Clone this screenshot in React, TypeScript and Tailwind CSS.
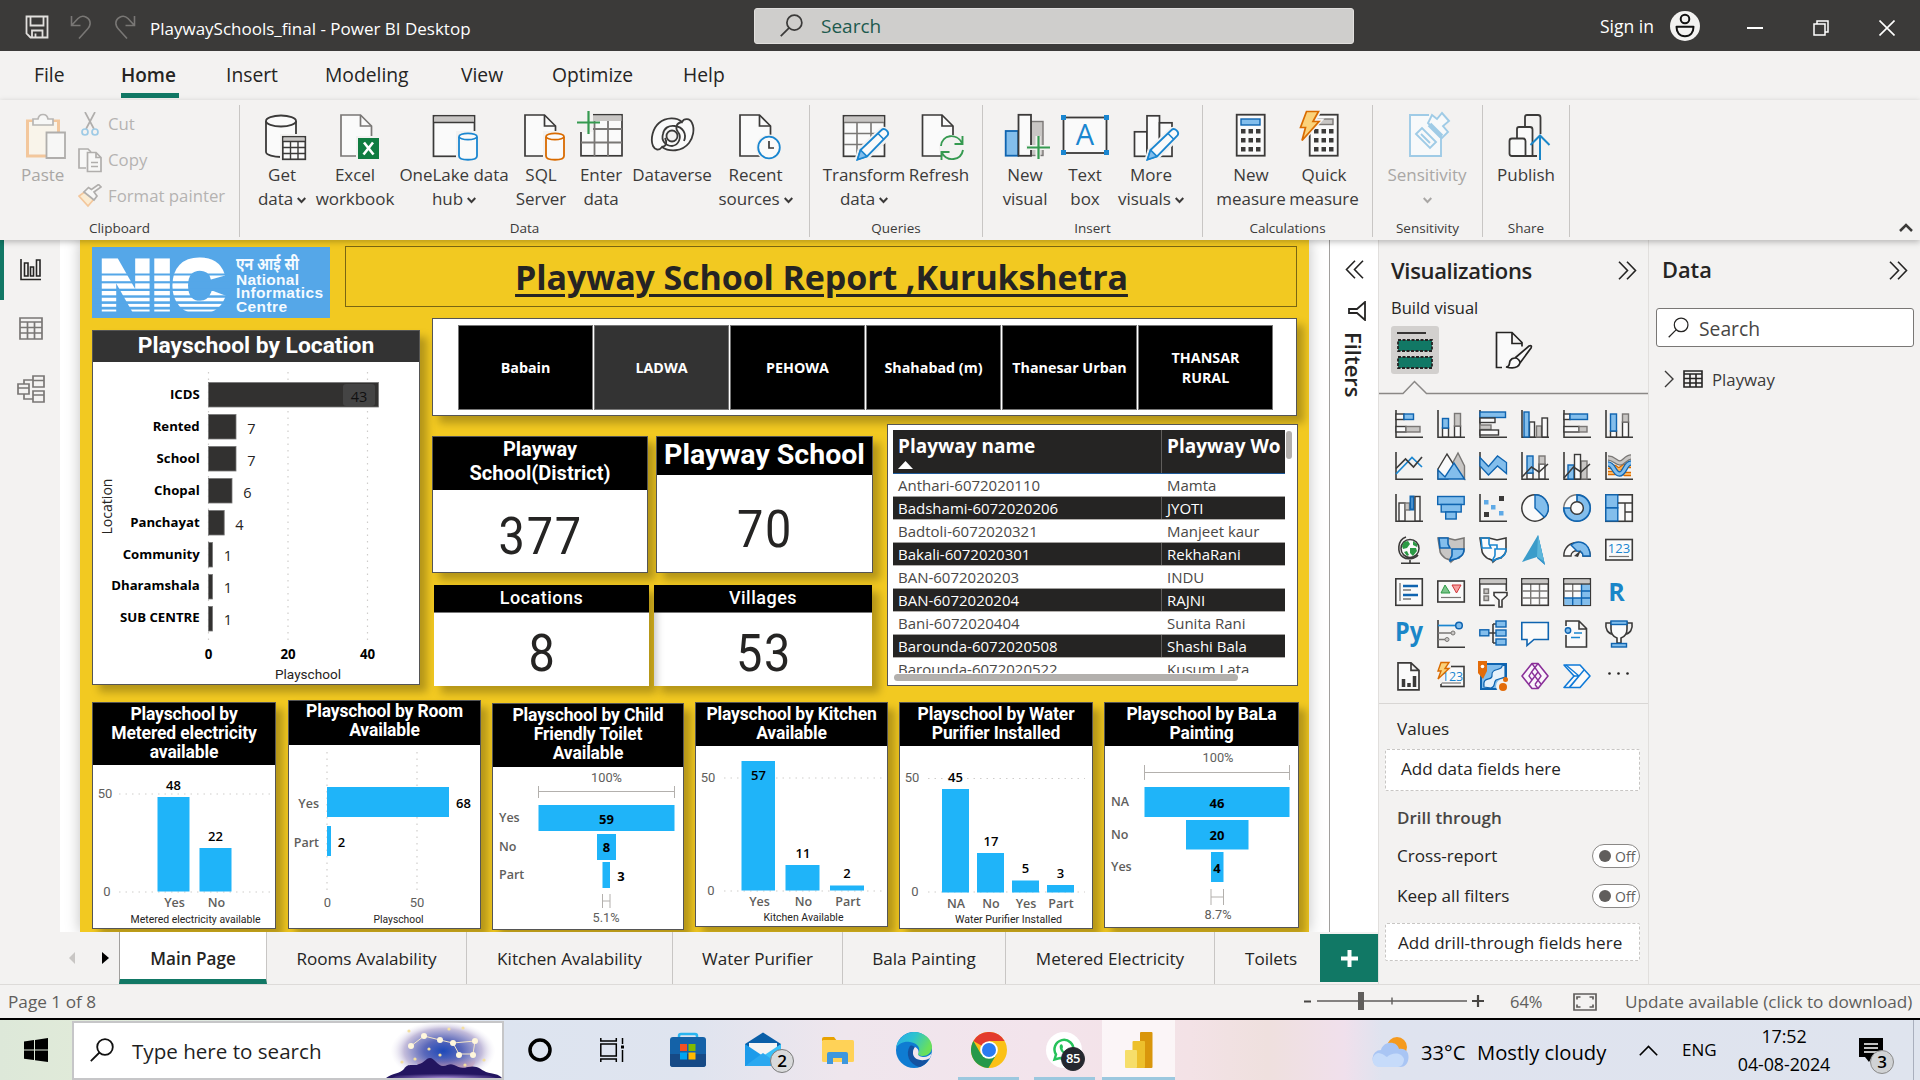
import React from "react";

const D = "#3b3a39";
const B = "#0f64b0";
const BF = "#83beec";
const G = "#797775";
const GF = "#c8c6c4";
const W = "#fafafa";
const UI = "'Open Sans', 'Noto Sans', sans-serif";
const DIN = "Roboto, sans-serif";

type Kids = { children?: React.ReactNode };

/* ---------- shared drawing helpers ---------- */

function R({ x, y, w, h, f = W, s = D, sw = 1.4 }: { x: number; y: number; w: number; h: number; f?: string; s?: string; sw?: number }) {
  return <rect x={x} y={y} width={w} height={h} fill={f} stroke={s} strokeWidth={sw} />;
}

function P({ d, s = D, f = "none", sw = 1.4 }: { d: string; s?: string; f?: string; sw?: number }) {
  return <path d={d} stroke={s} fill={f} strokeWidth={sw} />;
}

function Tx({
  x, y, size, children, fill = "#000", weight = 400, anchor = "middle", len, font = UI,
}: Kids & { x: number; y: number; size: number; fill?: string; weight?: number; anchor?: "start" | "middle" | "end"; len?: number; font?: string }) {
  return (
    <text x={x} y={y + size * 0.36} fontSize={size} fill={fill} fontWeight={weight} textAnchor={anchor} fontFamily={font} textLength={len} lengthAdjust="spacingAndGlyphs">
      {children}
    </text>
  );
}

function Magnifier({ size, color = D, sw = 1.8 }: { size: number; color?: string; sw?: number }) {
  return (
    <svg width={size} height={size} viewBox="0 0 24 24" fill="none" stroke={color} strokeWidth={sw}>
      <circle cx="15" cy="9" r="7.8" />
      <path d="M9.5 14.5L.8 23.2" />
    </svg>
  );
}

function Chevrons({ left = false }: { left?: boolean }) {
  return (
    <svg width="19" height="19" viewBox="0 0 19 19" fill="none" stroke="#252423" strokeWidth="1.6" className={left ? "-scale-x-100" : ""}>
      <path d="M1 .8l8.5 8.7L1 18.2M9 .8l8.5 8.7L9 18.2" />
    </svg>
  );
}

/* ---------- title bar ---------- */

function TitleBar() {
  return (
    <header className="flex h-[51px] items-center bg-[#3b3a39] text-white">
      <svg className="ml-[25px] mt-[3px]" width="24" height="24" viewBox="0 0 24 24" fill="none" stroke="#e1dfdd" strokeWidth="1.8">
        <path d="M1.5 1.5h21v21H5.5l-4-4zM5.5 1.5v9h13v-9M7 22.500v-7h10.500v7M10.500 18.500v4" />
      </svg>
      <svg className="ml-[21px] mt-[2px]" width="22" height="24" viewBox="0 0 22 24" fill="none" stroke="#797775" strokeWidth="1.6">
        <path d="M1.500 1v9.500h9M1.500 10.500L8 3.500c5-5 13-.5 12 6-.3 1.500-1 3-2 4L9 23.500" />
      </svg>
      <svg className="ml-[22px] mt-[2px] -scale-x-100" width="22" height="24" viewBox="0 0 22 24" fill="none" stroke="#797775" strokeWidth="1.6">
        <path d="M1.500 1v9.500h9M1.500 10.500L8 3.500c5-5 13-.5 12 6-.3 1.500-1 3-2 4L9 23.500" />
      </svg>
      <div className="ml-[14px] mt-[7px] w-[604px] whitespace-nowrap text-[17px]">PlaywaySchools_final - Power BI Desktop</div>
      <div className="flex h-[36px] w-[600px] items-center rounded-[3px] border border-[#e1dfdd] bg-[#cfcecc] pl-[25px]">
        <Magnifier size={23} />
        <span className="ml-[18px] mt-[2px] text-[19px] text-[#1d5a4e]">Search</span>
      </div>
      <div className="ml-[246px] mt-[2px] w-[54px] whitespace-nowrap text-[17.500px]">Sign in</div>
      <svg className="ml-[16px]" width="30" height="30" viewBox="0 0 30 30">
        <circle cx="15" cy="15" r="15" fill="#f3f2f1" />
        <circle cx="15" cy="8" r="4.300" fill="none" stroke="#111" strokeWidth="2" />
        <path d="M6.500 15.800h17c0 5.500-3 9.400-8.500 9.400s-8.500-4-8.500-9.400z" fill="none" stroke="#111" strokeWidth="2" strokeLinejoin="round" />
      </svg>
      <svg className="ml-[47px] mt-[5px]" width="16" height="2" viewBox="0 0 16 2"><path d="M0 1h16" stroke="#fff" strokeWidth="2" /></svg>
      <svg className="ml-[50px] mt-[4px]" width="16" height="16" viewBox="0 0 16 16" fill="none" stroke="#fff" strokeWidth="1.500">
        <path d="M1 4h11v11H1zM4 4V1h11v11h-3" />
      </svg>
      <svg className="ml-[50px] mt-[4px]" width="16" height="16" viewBox="0 0 16 16" stroke="#fff" strokeWidth="1.600"><path d="M.5.5l15 15M15.500.5l-15 15" /></svg>
    </header>
  );
}

function MenuBar() {
  return (
    <nav className="flex h-[49px] bg-[#f3f2f1] pl-[34px] text-[19.300px] leading-[26px] text-[#252423]">
      <div className="w-[87px] pt-[11px]">File</div>
      <div className="w-[105px] pt-[11px]">
        <div className="w-[58px] border-b-[5px] border-[#117865] pb-[5px] text-[19px] font-semibold">Home</div>
      </div>
      <div className="w-[99px] pt-[11px]">Insert</div>
      <div className="w-[136px] pt-[11px]">Modeling</div>
      <div className="w-[91px] pt-[11px]">View</div>
      <div className="w-[131px] pt-[11px]">Optimize</div>
      <div className="pt-[11px]">Help</div>
    </nav>
  );
}

/* ---------- ribbon icons (48 x 48) ---------- */

function Doc({ x = 8, s = D }: { x?: number; s?: string }) {
  return (
    <g transform={`translate(${x} 0)`}>
      <path d="M1 3h19.500l11 11v30H1z" fill={W} stroke={s} strokeWidth="1.700" />
      <path d="M20.500 3v11h11" fill="none" stroke={s} strokeWidth="1.700" />
    </g>
  );
}

function Cyl({ s, f = W }: { s: string; f?: string }) {
  return (
    <g>
      <rect x="26" y="19" width="24" height="31" fill="#f3f2f1" />
      <path d="M29 25v19c0 5 18 5 18 0V25" fill={f} stroke={s} strokeWidth="1.800" />
      <ellipse cx="38" cy="24.500" rx="9" ry="3.200" fill={f} stroke={s} strokeWidth="1.800" />
    </g>
  );
}

function Pencil({ x = 0 }: { x?: number }) {
  return (
    <g transform={`translate(${x} 0)`}>
      <path d="M17 48l3-10 21-20c3-3 10 3 7 7L27 45z" fill={W} stroke="#f3f2f1" strokeWidth="5" />
      <path d="M17.500 47.500l3-9.500 21-20c3-3 8.500 2 6 5.500L27 44.500z" fill={W} stroke="#1a86d0" strokeWidth="1.800" />
      <path d="M17.500 47.500l3-9.500 6.500 6.500z" fill={BF} stroke="#1a86d0" strokeWidth="1.600" />
      <path d="M38 21.500l6 6" fill="none" stroke="#1a86d0" strokeWidth="1.600" />
    </g>
  );
}

function Calc() {
  return (
    <g>
      <R x={9.700} y={2.700} w={28} h={41} sw={1.800} />
      {[18, 27, 36].map((y) => [14, 21.500, 29].map((x) => <rect key={`${x}-${y}`} x={x} y={y - 1} width="4.500" height="4.500" fill={D} />))}
    </g>
  );
}

const ribbonIcons: Record<string, React.ReactNode> = {
  get: (
    <g>
      <path d="M8 9v30c0 4 8 6 15 6V22h15V9z" fill={W} />
      <path d="M8 9v31c0 3 8 5 15 5M38 9v13" fill="none" stroke={D} strokeWidth="1.800" />
      <ellipse cx="23" cy="9" rx="15" ry="5.500" fill={W} stroke={D} strokeWidth="1.800" />
      <rect x="22" y="22" width="26" height="26" fill="#f3f2f1" />
      <R x={24.800} y={24.800} w={22.500} h={22.500} sw={1.700} />
      <rect x="25.500" y="25.500" width="21" height="4" fill={GF} />
      <P d="M25 29.500h22M25 35.500h22M25 41.500h22M32.500 29.500v18M40 29.500v18" />
    </g>
  ),
  excel: (
    <g>
      <Doc x={9} s={G} />
      <rect x="25" y="24" width="25" height="25" fill="#f3f2f1" />
      <rect x="27" y="26" width="21" height="21" fill="#107c41" />
      <path d="M33 30.500l9.500 12M42 30.500l-9.500 12" stroke="#fff" strokeWidth="2.600" />
    </g>
  ),
  onelake: (
    <g>
      <R x={3.500} y={3.800} w={41} h={40.500} sw={1.700} />
      <rect x="4.500" y="4.600" width="39.500" height="5.500" fill={GF} />
      <P d="M4 10.500h40" />
      <Cyl s="#1a86d0" />
    </g>
  ),
  sql: <g><Doc x={7} /><Cyl s="#d96b00" /></g>,
  enter: (
    <g>
      <R x={4} y={2.800} w={41} h={41} sw={1.700} />
      <rect x="5" y="3.500" width="39.500" height="5.500" fill={GF} />
      <P d="M4 17h41M4 30.500h41M17.500 9v35M31 9v35" s={G} sw={1.800} />
      <rect x="-2" y="-3" width="18" height="23" fill="#f3f2f1" />
      <path d="M0 10.500h23M11.500-1v23" stroke="#359a50" strokeWidth="2.200" />
    </g>
  ),
  dataverse: (
    <g fill={W} stroke={D} strokeWidth="1.800">
      <path d="M5 34C2 27 5 16 11 11c7-6 18-6 23-1 2-4 8-4 10 1 3 6 1 15-3 20-7 9-20 9-27 4-3 4-7 3-9-1z" />
      <path d="M34 10c-6 1-7 6-4 10 4 5 1 13-6 14-7 0-11-6-9-12 1-6 6-9 12-8 8 1 12 8 9 15" fill="none" />
      <path d="M14 35c5-1 5-5 3-9" fill="none" />
      <circle cx="24" cy="24" r="5.500" fill="#f3f2f1" />
    </g>
  ),
  recent: (
    <g>
      <Doc x={7} />
      <circle cx="37" cy="35.500" r="13" fill="#f3f2f1" />
      <circle cx="37" cy="35.500" r="10.800" fill={W} stroke="#1a86d0" strokeWidth="1.800" />
      <P d="M37 29v7h5" s={D} sw={1.700} />
    </g>
  ),
  transform: (
    <g>
      <R x={3.500} y={3.800} w={41} h={40.500} sw={1.700} />
      <rect x="4.500" y="4.600" width="39.500" height="5.500" fill={GF} />
      <P d="M4 10.500h40M4 21.500h40M4 32.500h40M17 10.500v34M31 10.500v34" s={G} sw={1.600} />
      <Pencil />
    </g>
  ),
  refresh: (
    <g>
      <Doc x={6.500} />
      <circle cx="37" cy="36" r="13" fill="#f3f2f1" />
      <path d="M26 34c1-12 16-13 21-3M48 38c-2 11-16 12-21 3M47.500 24v8h-8M26.500 48v-8h8" fill="none" stroke="#359a50" strokeWidth="1.900" />
    </g>
  ),
  newvis: (
    <g>
      <R x={30} y={9.500} w={12} h={34} f={GF} s={G} />
      <R x={4.700} y={19} w={12.500} h={24.700} f={BF} s={B} sw={1.800} />
      <R x={17.500} y={2.800} w={12.500} h={41} sw={1.800} />
      <path d="M25 35.500h24M37 24v24" stroke="#f3f2f1" strokeWidth="5" />
      <path d="M26 35.500h23M37.500 24v23" stroke="#359a50" strokeWidth="2.200" />
    </g>
  ),
  text: (
    <g>
      <R x={2.500} y={5.500} w={43} h={35.500} sw={1.800} />
      {[[0, 3], [43, 3], [0, 38], [43, 38]].map(([x, y]) => <rect key={`${x}-${y}`} x={x} y={y} width="5" height="5" fill="#1a86d0" />)}
      <Tx x={24} y={23} size={29} fill="#1a86d0">A</Tx>
    </g>
  ),
  more: (
    <g>
      <R x={7.500} y={19.800} w={12.500} h={24.500} sw={1.700} />
      <R x={20} y={3.800} w={12.500} h={40.500} sw={1.700} />
      <R x={32.500} y={10.800} w={12.500} h={33.500} sw={1.700} />
      <Pencil x={3} />
    </g>
  ),
  newmeasure: <g><Calc /><R x={14} y={7} w={19} h={6} f={BF} s={B} /></g>,
  quick: (
    <g>
      <Calc />
      <R x={16} y={7} w={17} h={5.500} f={GF} s={G} />
      <path d="M6-1h13l-6 10h6L1 29l4-14H0z" fill="#fbd27a" stroke="#f3f2f1" strokeWidth="5" />
      <path d="M6.500-.5h12l-5.500 10h6L2 28.500l3.500-13h-5z" fill="#fbd27a" stroke="#d96b00" strokeWidth="1.700" />
    </g>
  ),
  sens: (
    <g stroke="#9fcbe6" fill="#f7f9fa" strokeWidth="1.900">
      <path d="M26 3H7v41h31V24" />
      <path d="M13 22l6-6 14 14-6 6zM18 22l9 9" />
      <path d="M29 3l5 4 5-6 7 8-6 5 5 6-6 6-14-15z" />
      <path d="M26.500 12.500l12 12" strokeWidth="5" />
    </g>
  ),
  publish: (
    <g fill={W} stroke={D} strokeWidth="1.800">
      <path d="M23 14V5q0-2 2-2h11q2.500 0 2.500 2.500V44H23" fill="none" />
      <path d="M15 26V17q0-2 2-2h11q2.500 0 2.500 2.500V44H15z" />
      <path d="M7.500 42V29q0-2.500 2.500-2.500h11q2.500 0 2.500 2.500v15H10q-2.500 0-2.500-2.500z" />
      <path d="M31 44h5" />
      <path d="M38 22v26" stroke="#f3f2f1" strokeWidth="6" />
      <path d="M38 48V24M28.500 33l9.500-9.500 9.500 9.500" fill="none" stroke="#1a86c8" strokeWidth="2" />
    </g>
  ),
};

function Caret({ color = D }: { color?: string }) {
  return (
    <svg className="mt-[3px]" width="9" height="7" viewBox="0 0 9 7" fill="none" stroke={color} strokeWidth="2">
      <path d="M.7 1l3.800 4L8.300 1" />
    </svg>
  );
}

function RibbonButton({ icon, a, b, caret, width, dim }: { icon: string; a: string; b?: string; caret?: boolean; width: string; dim?: boolean }) {
  return (
    <div className={`flex flex-col items-center whitespace-nowrap text-[17px] leading-[24px] tracking-[-0.050px] ${width} ${dim ? "text-[#a9a7a5]" : "text-[#3b3a39]"}`}>
      <svg className="mt-[12px] overflow-visible" width="48" height="48" viewBox="0 0 48 48">{ribbonIcons[icon]}</svg>
      <div className="mt-[3px]">{a}</div>
      <div className="flex h-[24px] items-center gap-[4px]">
        {b}
        {caret && <Caret color={dim ? "#a9a7a5" : D} />}
      </div>
    </div>
  );
}

function RibbonGroup({ label, width, children, pad = "" }: Kids & { label: string; width: string; pad?: string }) {
  return (
    <div className={`mt-[5px] flex h-[132px] shrink-0 flex-col border-r border-[#c8c6c4] ${width}`}>
      <div className={`-mt-[5px] flex h-[120px] ${pad}`}>{children}</div>
      <div className="text-center text-[13.500px] leading-[18px] text-[#3b3a39]">{label}</div>
    </div>
  );
}

function Ribbon() {
  return (
    <section className="relative z-10 flex h-[140px] bg-[#f3f2f1] shadow-[0_2px_6px_rgba(0,0,0,0.25)]">
      <RibbonGroup label="Clipboard" width="w-[240px]">
        <div className="ml-[16px] flex w-[62px] flex-col items-center text-[17px] text-[#a9a7a5]">
          <svg className="-ml-[10px] mt-[12px]" width="48" height="48" viewBox="0 0 48 48">
            <path d="M17 9H9.500v35h20M33 9h7.500v12" fill="none" stroke="#f3c79c" strokeWidth="3" />
            <path d="M11 10h28v12H28v20H11z" fill="#f9f4ea" />
            <path d="M15 13V7h5c1-6 9-6 10 0h5v6z" fill="#f7f7f6" stroke="#b8b6b4" strokeWidth="1.700" />
            <path d="M28.500 20.500h18.500v25.500H28.500z" fill="#f7f7f6" stroke="#b0aeac" strokeWidth="1.800" />
          </svg>
          <div className="mt-[3px] w-[52px] leading-[24px]">Paste</div>
        </div>
        <div className="flex flex-col pt-[6px] text-[16.800px] text-[#b5b3b1]">
          <div className="flex h-[36px] items-center gap-[6px]">
            <svg width="24" height="24" viewBox="0 0 24 24" fill="none" strokeWidth="1.700">
              <path d="M7 0l9 17M17 0L8 17" stroke="#b0aeac" />
              <circle cx="7" cy="20" r="3" stroke="#9fcbe6" /><circle cx="17" cy="20" r="3" stroke="#9fcbe6" />
            </svg>
            Cut
          </div>
          <div className="flex h-[36px] items-center gap-[6px]">
            <svg width="24" height="25" viewBox="0 0 24 25" fill="#f7f7f6" stroke="#b0aeac" strokeWidth="1.700">
              <path d="M8 20H1V1h9l3 3" /><path d="M9.500 4.500H18l5 5v14H9.500zM18 4.500v5h5M13 14.500h7M13 18.500h7" />
            </svg>
            Copy
          </div>
          <div className="flex h-[36px] items-center gap-[6px]">
            <svg width="24" height="24" viewBox="0 0 24 24" strokeWidth="1.700">
              <path d="M8 7L1 12l9 10 6-7z" fill="#fbecd2" stroke="#f3c79c" />
              <path d="M6 8l10 8 3-4-3-4 7-5-2.500-2.500-7 5-3-2z" fill="#f7f7f6" stroke="#b0aeac" />
            </svg>
            <span className="whitespace-nowrap">Format painter</span>
          </div>
        </div>
      </RibbonGroup>
      <RibbonGroup label="Data" width="w-[570px]" pad="pl-[6px]">
        <RibbonButton icon="get" a="Get" b="data" caret width="w-[72px]" />
        <RibbonButton icon="excel" a="Excel" b="workbook" width="w-[74px]" />
        <RibbonButton icon="onelake" a="OneLake data" b="hub" caret width="w-[124px]" />
        <RibbonButton icon="sql" a="SQL" b="Server" width="w-[50px]" />
        <RibbonButton icon="enter" a="Enter" b="data" width="w-[70px]" />
        <RibbonButton icon="dataverse" a="Dataverse" width="w-[72px]" />
        <RibbonButton icon="recent" a="Recent" b="sources" caret width="w-[95px]" />
      </RibbonGroup>
      <RibbonGroup label="Queries" width="w-[173px]" pad="pl-[8px]">
        <RibbonButton icon="transform" a="Transform" b="data" caret width="w-[92px]" />
        <RibbonButton icon="refresh" a="Refresh" width="w-[58px]" />
      </RibbonGroup>
      <RibbonGroup label="Insert" width="w-[220px]" pad="pl-[17px]">
        <RibbonButton icon="newvis" a="New" b="visual" width="w-[50px]" />
        <RibbonButton icon="text" a="Text" b="box" width="w-[70px]" />
        <RibbonButton icon="more" a="More" b="visuals" caret width="w-[62px]" />
      </RibbonGroup>
      <RibbonGroup label="Calculations" width="w-[170px]" pad="pl-[11px]">
        <RibbonButton icon="newmeasure" a="New" b="measure" width="w-[74px]" />
        <RibbonButton icon="quick" a="Quick" b="measure" width="w-[72px]" />
      </RibbonGroup>
      <RibbonGroup label="Sensitivity" width="w-[110px]">
        <RibbonButton icon="sens" a="Sensitivity" caret dim width="w-[108px]" />
      </RibbonGroup>
      <RibbonGroup label="Share" width="w-[87px]">
        <RibbonButton icon="publish" a="Publish" width="w-[86px]" />
      </RibbonGroup>
      <svg className="ml-auto mr-[7px] mt-[123px]" width="14" height="9" viewBox="0 0 14 9" fill="none" stroke={D} strokeWidth="2.500"><path d="M1 8l6-6 6 6" /></svg>
    </section>
  );
}

/* ---------- view switcher ---------- */

function ViewRail() {
  return (
    <aside className="flex w-[60px] shrink-0 bg-[#f3f2f1]">
      <div className="h-[60px] w-[4px] bg-[#117865]" />
      <div className="flex flex-col items-center pl-[13px] pt-[18px]">
        <svg width="28" height="23" viewBox="0 0 28 23" fill="none" stroke="#252423" strokeWidth="1.600">
          <path d="M4 1v20.500h20M7.500 5h3.500v13H7.500zM13.500 9h3v9h-3zM19.500 2h3.500v16h-3.500z" />
        </svg>
        <svg className="mt-[36px]" width="24" height="23" viewBox="0 0 24 23" fill="none" stroke={G} strokeWidth="1.700">
          <path d="M1 1h22v21H1zM1 5h22M1 10.500h22M1 16h22M8.500 5v17M15.500 5v17" />
        </svg>
        <svg className="mt-[35px]" width="28" height="28" viewBox="0 0 28 28" fill="none" stroke={G} strokeWidth="1.700">
          <path d="M1 9h11v10H1zM1 13h11M16 1h11v11H16zM16 5.500h11M16 16h11v11H16zM16 20h11M7 9V5h9M7 19v5h9" />
        </svg>
      </div>
    </aside>
  );
}

/* ---------- report visuals ---------- */

function Logo() {
  return (
    <svg className="mt-[1px]" width="238" height="71" viewBox="0 0 238 71">
      <rect width="238" height="71" fill="#55a7e8" />
      <text x="7.500" y="64" fontSize="72" fontWeight="700" fill="#fff" stroke="#fff" strokeWidth="5" fontFamily="'Liberation Sans', sans-serif" textLength="125" lengthAdjust="spacingAndGlyphs">NIC</text>
      {[26.500, 34.200, 41.700, 48.300, 54.300, 59.800, 64.500].map((y, i) => <rect key={y} x="2" y={y} width="136" height={2 + i * 0.150} fill="#55a7e8" />)}
      <g fontFamily="'Liberation Sans', 'Noto Sans', sans-serif" fontWeight="700" fill="#f4faff" fontSize="15.500">
        <text x="144" y="23" fontSize="17" textLength="63" lengthAdjust="spacingAndGlyphs">एन आई सी</text>
        <text x="144" y="37.500" textLength="63">National</text>
        <text x="144" y="51" textLength="87">Informatics</text>
        <text x="144" y="65" textLength="51">Centre</text>
      </g>
    </svg>
  );
}

const cardShadow = "shadow-[7px_7px_8px_rgba(0,0,0,0.26)]";

const locations = [
  { name: "ICDS", v: 43, w: 170, lx: 359 },
  { name: "Rented", v: 7, w: 27.500, lx: 251.500 },
  { name: "School", v: 7, w: 27.500, lx: 251.500 },
  { name: "Chopal", v: 6, w: 23.500, lx: 247.500 },
  { name: "Panchayat", v: 4, w: 15.700, lx: 239.500 },
  { name: "Community", v: 1, w: 4, lx: 228 },
  { name: "Dharamshala", v: 1, w: 4, lx: 228 },
  { name: "SUB CENTRE", v: 1, w: 4, lx: 228 },
];

function Dots({ d }: { d: string }) {
  return <path d={d} stroke="#cfcdcb" strokeWidth="1.200" strokeDasharray="1.500 5" fill="none" />;
}

function LocationCard() {
  return (
    <div className={`mt-[12px] h-[355px] w-[328px] shrink-0 border border-[#555] bg-white ${cardShadow}`}>
      <div className="h-[31px] bg-[#333] text-center font-[Roboto] text-[22.800px] font-bold leading-[29px] text-white">Playschool by Location</div>
      <svg width="326" height="322" viewBox="93 362 326 322">
        <Dots d="M208.500 372V643M288 372V643M367.500 372V643" />
        {locations.map((l, i) => (
          <g key={l.name}>
            <rect x="208.500" y={382.500 + i * 32} width={l.w} height="24.500" fill="#323130" stroke="#777" strokeWidth=".8" />
            {i === 0 && <rect x="343" y="384" width="32" height="22" rx="3" fill="#444" />}
            <Tx x={199.700} y={394.500 + i * 31.850} size={13.200} weight={700} anchor="end">{l.name}</Tx>
            <Tx x={l.lx} y={396.500 + i * 31.950} size={14.500} fill={i === 0 ? "#111" : "#252423"}>{l.v}</Tx>
          </g>
        ))}
        <Tx x={208.500} y={654} size={13.300} weight={700}>0</Tx>
        <Tx x={288} y={654} size={13.300} weight={700}>20</Tx>
        <Tx x={367.500} y={654} size={13.300} weight={700}>40</Tx>
        <Tx x={308} y={674.500} size={13.500} len={66} font={DIN} fill="#252423">Playschool</Tx>
        <g transform="translate(107 506.500) rotate(-90)"><Tx x={0} y={0} size={14} len={56} fill="#252423">Location</Tx></g>
      </svg>
    </div>
  );
}

function Slicer() {
  const tiles = ["Babain", "LADWA", "PEHOWA", "Shahabad (m)", "Thanesar Urban", "THANSAR RURAL"];
  return (
    <div className={`flex h-[98px] w-[865px] gap-[1px] border border-[#555] bg-white pb-[5px] pl-[25px] pt-[6px] ${cardShadow}`}>
      {tiles.map((t) => (
        <div key={t} className={`flex w-[135px] shrink-0 items-center justify-center border border-[#777] text-center text-[14.300px] font-bold leading-[20px] text-white ${t === "LADWA" ? "bg-[#333]" : "bg-black"} ${t.startsWith("THANSAR") ? "px-[20px]" : "whitespace-nowrap"}`}>
          {t}
        </div>
      ))}
    </div>
  );
}

function Kpi({ title, value, box, head, body }: { title: React.ReactNode; value: string; box: string; head: string; body: string }) {
  return (
    <div className={`flex flex-col bg-white font-[Roboto] ${cardShadow} ${box}`}>
      <div className={`bg-black text-center text-white ${head}`}>{title}</div>
      <div className={`text-center text-[52px] leading-[52px] text-[#252423] ${body}`}>
        <span className="inline-block scale-x-90 pl-[2px] tracking-[2px]">{value}</span>
      </div>
    </div>
  );
}

const rows = [
  ["Anthari-6072020110", "Mamta"],
  ["Badshami-6072020206", "JYOTI"],
  ["Badtoli-6072020321", "Manjeet kaur"],
  ["Bakali-6072020301", "RekhaRani"],
  ["BAN-6072020203", "INDU"],
  ["BAN-6072020204", "RAJNI"],
  ["Bani-6072020404", "Sunita Rani"],
  ["Barounda-6072020508", "Shashi Bala"],
  ["Barounda-6072020522", "Kusum Lata"],
];

function NameTable() {
  return (
    <div className="mt-[8px] h-[262px] w-[411px] border border-[#555] bg-white pl-[5px] pt-[5px]">
      <div className="flex">
        <div className="h-[243px] w-[392px] overflow-hidden">
          <div className="flex h-[44px] border-b border-[#1d5a9a] bg-[#252423] text-[19px] font-bold leading-[24px] text-white">
            <div className="w-[269px] border-r border-[#605e5c] pl-[5px] pt-[4px]">
              Playway name
              <svg className="mt-[3px]" width="15" height="8" viewBox="0 0 15 8"><path d="M0 8L7.500 0 15 8z" fill="#fff" /></svg>
            </div>
            <div className="whitespace-nowrap pl-[5px] pt-[4px]">Playway Wo</div>
          </div>
          {rows.map(([n, w], i) => (
            <div key={n} className={`flex h-[23px] border-b text-[15px] leading-[23px] ${i % 2 ? "border-[#b3b0ad] bg-[#252423] text-white" : "border-[#a19f9d] text-[#4a4846]"}`}>
              <div className={`w-[269px] border-r pl-[5px] ${i % 2 ? "border-[#605e5c]" : "border-transparent"}`}>{n}</div>
              <div className="pl-[5px]">{w}</div>
            </div>
          ))}
        </div>
        <div className="ml-[1px] mt-[1px] h-[28px] w-[6px] rounded-full bg-[#b3b0ad]" />
      </div>
      <div className="ml-[1px] mt-[1px] h-[7px] w-[344px] rounded-full bg-[#b3b0ad]" />
    </div>
  );
}

const BAR = "#1fb4f9";
const AX = "#605e5c";

function Bars({ items }: { items: [number, number, number, number][] }) {
  return <>{items.map(([x, y, w, h]) => <rect key={`${x}-${y}`} x={x} y={y} width={w} height={h} fill={BAR} />)}</>;
}

function ChartCard({ title, box, head, view, w, h, children }: Kids & { title: string[]; box: string; head: string; view: string; w: number; h: number }) {
  return (
    <div className={`shrink-0 overflow-hidden border border-[#555] bg-white ${cardShadow} ${box}`}>
      <div className={`bg-black pt-[1px] text-center font-[Roboto] text-[17.500px] font-bold leading-[19px] tracking-[-0.150px] text-white ${head}`}>
        {title.map((t) => <div key={t} className="whitespace-nowrap">{t}</div>)}
      </div>
      <svg width={w} height={h} viewBox={view}>{children}</svg>
    </div>
  );
}

const lab = { size: 12.500, weight: 600, fill: AX };
const val = { size: 13, weight: 600, fill: "#000" };

function BottomRow() {
  return (
    <div className="mt-[14px] flex">
      <ChartCard title={["Playschool by", "Metered electricity", "available"]} box="mt-[2px] h-[227px] w-[184px]" head="h-[62px] pt-[2px]" w={182} h={163} view="93 765 182 163">
        <Dots d="M119 794H274M119 892H274" />
        <Bars items={[[157.500, 797, 32, 94.500], [199.500, 848, 32, 43.500]]} />
        <Tx x={105} y={793.500} size={13} fill={AX} font={DIN}>50</Tx>
        <Tx x={107} y={891.500} size={13} fill={AX} font={DIN}>0</Tx>
        <Tx x={173.500} y={785.500} {...val}>48</Tx>
        <Tx x={215.500} y={836.500} {...val}>22</Tx>
        <Tx x={174.500} y={902.500} {...lab}>Yes</Tx>
        <Tx x={216.500} y={902.500} {...lab}>No</Tx>
        <Tx x={195.500} y={919.500} size={11} len={130} fill="#252423" font={DIN}>Metered electricity available</Tx>
      </ChartCard>
      <ChartCard title={["Playschool by Room", "Available"]} box="ml-[12px] h-[229px] w-[193px]" head="h-[44px]" w={191} h={183} view="289 745 191 183">
        <Dots d="M327 752V894M417 752V894" />
        <Bars items={[[327, 787, 122, 30], [327, 826, 4, 30]]} />
        <Tx x={319} y={803} {...lab} anchor="end">Yes</Tx>
        <Tx x={319} y={842} {...lab} anchor="end">Part</Tx>
        <Tx x={463.500} y={803.500} {...val}>68</Tx>
        <Tx x={341.500} y={842.500} {...val}>2</Tx>
        <Tx x={327.500} y={902.500} size={13} fill={AX} font={DIN}>0</Tx>
        <Tx x={417} y={902.500} size={13} fill={AX} font={DIN}>50</Tx>
        <Tx x={398.500} y={919.500} size={11} len={50} fill="#252423" font={DIN}>Playschool</Tx>
      </ChartCard>
      <ChartCard title={["Playschool by Child", "Friendly Toilet", "Available"]} box="ml-[11px] mt-[3px] h-[227px] w-[192px]" head="h-[63px] pt-[2px]" w={190} h={162} view="493 767 190 162">
        <P d="M538.500 786V798M674.500 786V798M538.500 791.500H674.500" s="#b3b0ad" sw={1} />
        <Bars items={[[538.500, 805, 136, 26], [597, 834, 19, 26], [602.500, 862, 7.500, 26]]} />
        <Tx x={606.500} y={777.500} size={13} fill={AX} font={DIN} len={31}>100%</Tx>
        <Tx x={499} y={817.500} {...lab} anchor="start">Yes</Tx>
        <Tx x={499} y={846.500} {...lab} anchor="start">No</Tx>
        <Tx x={499} y={874.500} {...lab} anchor="start">Part</Tx>
        <Tx x={606.500} y={819} size={13} weight={700}>59</Tx>
        <Tx x={606.500} y={847} size={13} weight={700}>8</Tx>
        <Tx x={621} y={876} size={13} weight={700}>3</Tx>
        <P d="M602.500 894V908M610 894V908M602.500 901H610" s="#b3b0ad" sw={1} />
        <Tx x={606} y={917.500} size={13} fill={AX} font={DIN} len={27}>5.1%</Tx>
      </ChartCard>
      <ChartCard title={["Playschool by Kitchen", "Available"]} box="ml-[11px] mt-[2px] h-[225px] w-[193px]" head="h-[43px] pt-[2px]" w={191} h={180} view="696 746 191 180">
        <Dots d="M724 778H882M724 891H882" />
        <Bars items={[[741.500, 761, 33.500, 129.500], [785.500, 865, 34, 25.500], [830, 885.500, 34, 5]]} />
        <Tx x={708} y={777.500} size={13} fill={AX} font={DIN}>50</Tx>
        <Tx x={711} y={890.500} size={13} fill={AX} font={DIN}>0</Tx>
        <Tx x={758.500} y={775.500} {...val}>57</Tx>
        <Tx x={803} y={853.500} {...val}>11</Tx>
        <Tx x={847} y={873.500} {...val}>2</Tx>
        <Tx x={759.500} y={901.500} {...lab}>Yes</Tx>
        <Tx x={803.500} y={901.500} {...lab}>No</Tx>
        <Tx x={848} y={901.500} {...lab}>Part</Tx>
        <Tx x={803.500} y={917.500} size={11} len={80} fill="#252423" font={DIN}>Kitchen Available</Tx>
      </ChartCard>
      <ChartCard title={["Playschool by Water", "Purifier Installed"]} box="ml-[11px] mt-[2px] h-[227px] w-[194px]" head="h-[43px] pt-[2px]" w={192} h={182} view="900 746 192 182">
        <Dots d="M928 778.500H1085M928 892H1085" />
        <Bars items={[[942, 789, 27, 103.500], [977, 853, 27, 39.500], [1012, 880.500, 27, 12], [1047, 885, 27, 7.500]]} />
        <Tx x={912} y={777.500} size={13} fill={AX} font={DIN}>50</Tx>
        <Tx x={915} y={891.500} size={13} fill={AX} font={DIN}>0</Tx>
        <Tx x={955.500} y={777.500} {...val}>45</Tx>
        <Tx x={991} y={841.500} {...val}>17</Tx>
        <Tx x={1025.500} y={868.500} {...val}>5</Tx>
        <Tx x={1060.500} y={873.500} {...val}>3</Tx>
        <Tx x={956} y={903.500} {...lab}>NA</Tx>
        <Tx x={991} y={903.500} {...lab}>No</Tx>
        <Tx x={1026} y={903.500} {...lab}>Yes</Tx>
        <Tx x={1061} y={903.500} {...lab}>Part</Tx>
        <Tx x={1008.500} y={919.500} size={11} len={107} fill="#252423" font={DIN}>Water Purifier Installed</Tx>
      </ChartCard>
      <ChartCard title={["Playschool by BaLa", "Painting"]} box="ml-[11px] mt-[2px] h-[226px] w-[195px]" head="h-[43px] pt-[2px]" w={193} h={181} view="1105 746 193 181">
        <P d="M1144.500 765V780M1289.500 765V780M1144.500 772.500H1289.500" s="#b3b0ad" sw={1} />
        <Bars items={[[1144.500, 787, 145, 30], [1186, 820, 62.500, 29.500], [1211, 852, 12.500, 30]]} />
        <Tx x={1218} y={757.500} size={13} fill={AX} font={DIN} len={31}>100%</Tx>
        <Tx x={1111} y={801} {...lab} anchor="start">NA</Tx>
        <Tx x={1111} y={834.500} {...lab} anchor="start">No</Tx>
        <Tx x={1111} y={866} {...lab} anchor="start">Yes</Tx>
        <Tx x={1217} y={803} size={13} weight={700}>46</Tx>
        <Tx x={1217} y={835.500} size={13} weight={700}>20</Tx>
        <Tx x={1217} y={868} size={13} weight={700}>4</Tx>
        <P d="M1211 889V905M1223.500 889V905M1211 897H1223.500" s="#b3b0ad" sw={1} />
        <Tx x={1218} y={914.500} size={13} fill={AX} font={DIN} len={27}>8.7%</Tx>
      </ChartCard>
    </div>
  );
}

function Report() {
  return (
    <main className="h-[692px] w-[1269px] shrink-0 overflow-hidden bg-white pl-[20px]">
      <div className="h-[692px] w-[1229px] overflow-hidden bg-[#f2c921] pl-[12px] pt-[6px] shadow-[0_0_14px_rgba(0,0,0,0.25)]">
        <div className="flex h-[72px]">
          <Logo />
          <div className="ml-[15px] h-[61px] w-[952px] border-[1.500px] border-[#7a6612] pl-[1px] text-center text-[34px] font-bold leading-[61px] text-[#252423] underline decoration-[3px] underline-offset-[4px]">
            <span className="tracking-[-0.120px]">Playway School Report ,Kurukshetra</span>
          </div>
        </div>
        <div className="flex">
          <LocationCard />
          <div className="ml-[12px]">
            <Slicer />
            <div className="flex">
              <div className="mt-[20px] w-[455px]">
                <div className="flex gap-[8px]">
                  <Kpi title={<>Playway<br />School(District)</>} value="377" box="h-[137px] w-[216px] border border-[#555]" head="h-[53px] text-[20px] font-bold leading-[24px]" body="mt-[21px]" />
                  <Kpi title="Playway School" value="70" box="h-[137px] w-[217px] border border-[#555]" head="h-[38px] whitespace-nowrap text-[28.500px] font-bold leading-[36px]" body="mt-[29px]" />
                </div>
                <div className="mt-[12px] flex gap-[5px] pl-[2px]">
                  <Kpi title="Locations" value="8" box="relative z-10 h-[101px] w-[215px]" head="h-[28px] border-b border-[#777] text-[18px] font-medium leading-[26px] tracking-[0.500px]" body="mt-[15px]" />
                  <Kpi title="Villages" value="53" box="h-[101px] w-[218px]" head="h-[28px] border-b border-[#777] text-[18px] font-medium leading-[26px] tracking-[0.500px]" body="mt-[15px]" />
                </div>
              </div>
              <NameTable />
            </div>
          </div>
        </div>
        <BottomRow />
      </div>
    </main>
  );
}

/* ---------- side panes ---------- */

function FiltersPane() {
  return (
    <aside className="flex w-[49px] shrink-0 flex-col items-center border-l border-[#a19f9d] bg-white pt-[20px]">
      <Chevrons left />
      <svg className="ml-[5px] mt-[22px]" width="18" height="20" viewBox="0 0 18 20" fill="none" stroke="#252423" strokeWidth="1.800">
        <path d="M17 1v18l-8-7H1V8h8z" />
      </svg>
      <div className="mt-[11px] text-[22px] font-semibold leading-[26px] text-[#252423] [writing-mode:vertical-rl]">Filters</div>
    </aside>
  );
}

const axis = <path d="M1 0v27.300h27" fill="none" stroke={D} strokeWidth="1.600" />;

const vizIcons: React.ReactNode[] = [
  <>{axis}<R x={1} y={4} w={8} h={5.500} /><R x={9} y={4} w={9.500} h={5.500} f={BF} s={B} /><R x={1} y={16.500} w={10} h={5.500} /><R x={11} y={16.500} w={14} h={5.500} f={GF} s={G} /></>,
  <>{axis}<R x={5.500} y={18} w={6} h={9} /><R x={5.500} y={8.500} w={6} h={9.500} f={BF} s={B} /><R x={17.500} y={16} w={6} h={11} /><R x={17.500} y={3.500} w={6} h={12.500} f={GF} s={G} /></>,
  <>{axis}<R x={1} y={2} w={25.500} h={5.500} f={BF} s={B} /><R x={1} y={8} w={15} h={4.500} /><R x={1} y={15} w={11} h={4.500} f={GF} s={G} /><R x={1} y={20} w={18.500} h={5} /></>,
  <>{axis}<R x={8.500} y={12} w={5} h={15} /><R x={3} y={2} w={5} h={25} f={BF} s={B} /><R x={15.500} y={16} w={5} h={11} f={GF} s={G} /><R x={21} y={8} w={5.500} h={19} /></>,
  <>{axis}<R x={1} y={4} w={6} h={5.500} /><R x={7} y={4} w={17.500} h={5.500} f={BF} s={B} /><R x={1} y={16.500} w={15} h={5.500} /><R x={16} y={16.500} w={8} h={5.500} f={GF} s={G} /></>,
  <>{axis}<R x={5.500} y={21} w={6} h={6} /><R x={5.500} y={4} w={6} h={17} f={BF} s={B} /><R x={17.500} y={12} w={6} h={15} /><R x={17.500} y={4} w={6} h={8} f={GF} s={G} /></>,

  <>{axis}<P d="M1 22L17 5.500l10 9.500" s="#1a86d0" sw={1.700} /><P d="M1 16.500L10.500 7l8 8L27 5" sw={1.700} /></>,
  <><P d="M14 14l7-13 6.500 13v13z" s={G} f={GF} /><P d="M1 17L10 2l7 11-6 14H1z" f={W} /><P d="M1 18l7 7 9-14 10.500 16H1z" s={B} f={BF} /></>,
  <>{axis}<P d="M1 5.500l8.500 9L18.500 4l9 6.500v11l-9-7.500-9 9-8.500-9z" s={B} f={BF} sw={1.300} /></>,
  <>{axis}<R x={6} y={21} w={6} h={6} /><R x={6} y={4} w={6} h={17} f={BF} s={B} /><R x={18} y={12} w={6} h={15} /><R x={18} y={4} w={6} h={8} f={GF} s={G} /><P d="M1 25l9.500-10 7.500 5 9-8" sw={1.600} /></>,
  <>{axis}<R x={5} y={13} w={6} h={14} f={BF} s={B} /><R x={18} y={9} w={6} h={18} f={GF} s={G} /><R x={11.500} y={2.500} w={6} h={24.500} /><P d="M1 26l9.500-11 7.500 5 9-8" sw={1.600} /></>,
  <>{axis}<path d="M3 15h7l10 7h6M3 21h6l10-7h7" fill="none" stroke="#d96b00" strokeWidth="4.500" /><path d="M3 15h7l10 7h6M3 21h6l10-7h7" fill="none" stroke="#fbb45e" strokeWidth="1.800" /><path d="M3 12c6 0 6 10 11.500 10S20 11 26 11" fill="none" stroke={B} strokeWidth="5.500" /><path d="M3 12c6 0 6 10 11.500 10S20 11 26 11" fill="none" stroke={BF} strokeWidth="3" /><path d="M3 6c6 0 8 5 12 5s6-6 11-6" fill="none" stroke={G} strokeWidth="5.500" /><path d="M3 6c6 0 8 5 12 5s6-6 11-6" fill="none" stroke={GF} strokeWidth="3" /></>,

  <>{axis}<R x={4} y={9} w={6} h={18} /><R x={10} y={9} w={4.500} h={7} f={GF} s={G} /><R x={15.500} y={2.500} w={3} h={13} f={BF} s={B} sw={2} /><R x={20} y={2.500} w={5} h={24.500} /></>,
  <g transform="translate(.7 0)"><R x={0} y={2.500} w={26.500} h={8} f={BF} s={B} /><R x={3.500} y={10.500} w={20} h={7.500} f={BF} s={B} /><R x={8} y={18} w={10.500} h={7} f={BF} s={B} /></g>,
  <>{axis}<rect x="20" y="2" width="5" height="5" fill={D} /><rect x="5" y="6" width="4.500" height="4.500" fill="#5ea9e6" /><rect x="12" y="11" width="4.500" height="4.500" fill="#5ea9e6" /><rect x="5" y="18" width="5" height="5" fill={D} /><rect x="20" y="17" width="4.500" height="4.500" fill="#5ea9e6" /></>,
  <><circle cx="14" cy="14" r="13.200" fill={W} stroke={D} strokeWidth="1.500" /><P d="M14 .8a13.200 13.200 0 0 1 9.300 22.500L14 14z" s={B} f={BF} /></>,
  <><circle cx="14" cy="14" r="13.200" fill={W} stroke={G} strokeWidth="1.500" /><P d="M14 .8A13.200 13.200 0 1 1 .8 14H8a6 6 0 1 0 6-6z" s={B} f={BF} sw={1.700} /><circle cx="14" cy="14" r="6.300" fill={W} stroke={D} strokeWidth="1.400" /></>,
  <><R x={.8} y={.8} w={26.500} h={26.500} sw={1.600} /><R x={.8} y={.8} w={12} h={13} f={BF} s={B} /><R x={.8} y={14} w={12} h={13} f={BF} s={B} /><P d="M13 9h14.500M20 9v18M20 18h7" /></>,

  <><circle cx="15" cy="12.500" r="9" fill={W} stroke={D} strokeWidth="1.500" /><path d="M9 6l4-1 2 3-3 4-4 1-1-3zM18 5l4 3v3l-4-2zM15 12h6l1 3-4 5-3-3zM9 16l3-1 2 4-2 1z" fill="#2c9a45" /><P d="M11 1C2 4 2 17 8 21c4 3 12 2 15-2M15 24v3M6 27.300h19" sw={1.600} /></>,
  <><P d="M1 2h9l8 2 9-2v12c0 5-4 6-5 8-4-1-6 2-8 4-1-4-4-2-6-4s-5-4-5-7z" s={G} f={GF} sw={1.600} /><P d="M2 2h9v6l2 4H3zM15 13h12c0 6-3 7-6 9s-4 0-8 3c-1-3 2-3 2-6z" s={B} f={BF} sw={1.600} /></>,
  <><P d="M1 2h9l8 2 9-2v12c0 5-4 6-5 8-4-1-6 2-8 4-1-4-4-2-6-4s-5-4-5-7z" f={W} sw={1.600} /><P d="M2 2h8v6l2 4H3zM16 13h11c0 6-3 7-6 9s-4 0-7 3c-1-3 2-3 2-6zM10 9h8v4" s="#1a86d0" f="none" sw={1.600} /></>,
  <g transform="translate(2 0)"><path d="M15-1L22 29l-8-7z" fill="#1a7fd0" /><path d="M15-1L-1 26l15-5 8 8z" fill="#3b9cca" /><path d="M15-1l-1 22 7 4z" fill="#5cb6da" /></g>,
  <><P d="M.8 20C1 2 27 2 27.200 20H20c0-7-12-7-12 0z" f={W} /><P d="M8 9C15 3 27 6 27.200 20H20c0-4-3-5-6-5z" s={B} f={BF} /><path d="M11 20l7-6-3 7z" fill={D} /></>,
  <><R x={.8} y={3.500} w={26.500} h={20.500} sw={1.600} /><Tx x={14} y={12} size={13} fill="#1a86d0">123</Tx><P d="M4 20.500h20" s={G} sw={1.200} /></>,

  <><R x={.8} y={.8} w={26.500} h={26.500} sw={1.600} /><path d="M8 8h15M8 17h15" stroke={B} strokeWidth="2.500" /><path d="M5 5v18M8 12h8M8 21h8" stroke={G} strokeWidth="1.300" /></>,
  <><R x={.8} y={3} w={26.500} h={21} sw={1.600} /><path d="M4 15l4-8 5 8z" fill="#7bc48a" stroke="#2c9a45" /><path d="M15 7h9l-4.500 8z" fill="#f7a0a0" stroke="#d13438" /><P d="M4 19.500h20" s={G} sw={1.200} /></>,
  <><R x={.8} y={.8} w={26.500} h={26.500} sw={1.600} /><rect x="1.500" y="1.500" width="25" height="4" fill={GF} /><P d="M1 6h26" /><R x={5} y={11} w={4.500} h={4.500} f={GF} s={G} /><R x={5} y={18} w={4.500} h={4.500} f={GF} s={G} /><path d="M14 13h16v16H16z" fill="#f3f2f1" /><P d="M15 14.500h13v3l-5 4.500v7h-3v-7l-5-4.500z" f={W} sw={1.600} /></>,
  <><R x={.8} y={.8} w={26.500} h={26.500} sw={1.600} /><rect x="1.500" y="1.500" width="25" height="4" fill={GF} /><P d="M1 13h26M1 20h26M9.700 6v21M18.500 6v21" s={G} /><P d="M1 6h26" /></>,
  <><R x={.8} y={.8} w={26.500} h={26.500} sw={1.600} /><rect x="1.500" y="1.500" width="25" height="4" fill={GF} /><rect x="18.500" y="6" width="8.500" height="21" fill={BF} /><rect x="1.500" y="20" width="25" height="7" fill={BF} /><P d="M1 13h17.500M9.700 6v14" s={G} /><P d="M18.500 13H27M1 20h26M9.700 20v7M18.500 6v21" s={B} /><P d="M1 6h26" /></>,
  <Tx x={11.500} y={14} size={25} weight={700} fill="#1a86c8">R</Tx>,

  <Tx x={14} y={12} size={26} weight={700} fill="#1a86c8" len={28}>Py</Tx>,
  <>{axis}<P d="M1 5.500h19" s="#1a86d0" sw={1.700} /><circle cx="22" cy="5.500" r="3.300" fill={BF} stroke={B} strokeWidth="1.500" /><P d="M1 13h13M1 19.500h7" s={G} /><circle cx="16" cy="13" r="2" fill={GF} stroke={G} /><circle cx="10" cy="19.500" r="2" fill={GF} stroke={G} /></>,
  <><P d="M10 13h4M14 4v19M14 4h3M14 13h3M14 23h3" sw={1.600} /><R x={.8} y={9.800} w={9} h={6} f={BF} s={B} /><R x={17} y={1} w={10} h={6} f={BF} s={B} /><R x={17} y={10} w={10} h={6} f={BF} s={B} /><R x={17} y={19} w={10} h={6} f={BF} s={B} /></>,
  <P d="M.8 2.500h26.500v17H13l-7 6v-6H.8z" s={B} f={W} sw={1.600} />,
  <><P d="M3 6V1h13l7.500 7.500v18.500H3V15M16 1v8h7.500" f={W} sw={1.600} /><circle cx="5" cy="10.500" r="2.700" fill={BF} stroke={B} strokeWidth="1.400" /><P d="M11 13h8M8 17.500h9" s="#1a86d0" sw={1.500} /></>,
  <><P d="M6 3H1c-1 6 2 11 7 11M22 3h5c1 6-2 11-7 11" sw={1.600} /><P d="M6 2h16v7c0 6-3 8-6 9v5h-4v-5c-3-1-6-3-6-9z" f={W} sw={1.600} /><R x={6} y={1} w={16} h={3.500} f={BF} s={B} /><R x={6.500} y={23.500} w={15} h={3.500} f={BF} s={B} /></>,

  <><P d="M3 .8h13l8 7.500v19.500H3zM16 .8v7.500h8" f={W} sw={1.700} /><path d="M8.500 25v-8M14 25v-4M19.500 25V14" stroke={D} strokeWidth="3.500" /></>,
  <><R x={4} y={4.500} w={23} h={20} sw={1.600} /><path d="M0-1h14v9L4 22H0z" fill="#f3f2f1" /><rect x="7" y="9" width="18" height="12" fill={W} /><Tx x={15.500} y={14.500} size={12.500} fill="#1a86d0">123</Tx><P d="M5 21h19" s={G} sw={1.200} /><path d="M4 .5h8l-4 6h4L1 17l3-8H1z" fill="#fbd27a" stroke="#d96b00" strokeWidth="1.400" /></>,
  <><R x={2} y={2} w={25} h={25} f={BF} s={B} sw={2} /><path d="M5 25c-2-12 9-5 8-12S23 9 23 4l3-1v12l-9 3c-3 3 0 7-5 8z" fill="#e7f1fa" stroke={B} strokeWidth="1.200" /><circle cx="24" cy="24" r="7" fill="#f3f2f1" /><circle cx="24" cy="25" r="4" fill="#e36c0a" /><circle cx="26.500" cy="17.500" r="2.500" fill="#e36c0a" /><path d="M-1-1h9v10l-4 8-5-6z" fill="#e36c0a" /><circle cx="3.500" cy="4.500" r="1.800" fill="#fff" /></>,
  <><path d="M11 1.500h6L27 14 17 26.500h-6L1 14z" fill="#faf5fb" stroke="#8a3099" strokeWidth="1.600" strokeLinejoin="round" /><path d="M11 1.500L20 14l-6 8.500M17 1.500L10.500 10 20 22M14 22.500l3 4M10.500 10L8 14l3 4 6-8M11 18l-3 4" fill="none" stroke="#8a3099" strokeWidth="1.400" /></>,
  <><path d="M1 3h16l10 11-10 11.500H1L11 14z" fill={W} stroke="#0f7ad8" strokeWidth="1.600" strokeLinejoin="round" /><path d="M11 14h5L6.500 25M21 8L7 25M3 3l13 11" fill="none" stroke="#0f7ad8" strokeWidth="1.400" /></>,
  <><circle cx="4.500" cy="11.500" r="1.300" fill="#252423" /><circle cx="13.500" cy="11.500" r="1.300" fill="#252423" /><circle cx="22.500" cy="11.500" r="1.300" fill="#252423" /></>,
];

function Toggle() {
  return (
    <div className="flex h-[24px] w-[48px] items-center gap-[4px] rounded-full border border-[#8a8886] bg-white pl-[6px] text-[14px] text-[#605e5c]">
      <span className="h-[12px] w-[12px] rounded-full bg-[#605e5c]" />Off
    </div>
  );
}

function VisualizationsPane() {
  return (
    <aside className="flex w-[271px] shrink-0 flex-col border-l border-r border-[#e1dfdd] bg-[#f3f2f1] text-[17.100px] text-[#252423]">
      <div className="ml-[12px] mr-[11px] mt-[14px] flex h-[32px] items-center justify-between">
        <span className="text-[22px] font-semibold leading-[30px] tracking-[-0.350px]">Visualizations</span>
        <Chevrons />
      </div>
      <div className="ml-[12px] mt-[10px] h-[25px] text-[16.500px] font-medium leading-[24px]">Build visual</div>
      <div className="ml-[12px] mt-[5px] flex">
        <div className="flex h-[48px] w-[48px] items-center justify-center rounded-[3px] bg-[#d2d0ce]">
          <svg width="36" height="38" viewBox="0 0 36 38">
            <path d="M0 2h29" stroke="#252423" strokeWidth="1.800" />
            <rect x="1" y="9" width="34" height="11" fill="#117865" stroke="#252423" strokeWidth="1.800" strokeDasharray="3 1.500" />
            <rect x="1" y="26" width="34" height="11" fill="#117865" stroke="#252423" strokeWidth="1.800" strokeDasharray="3 1.500" />
          </svg>
        </div>
        <svg className="ml-[56px] mt-[5px]" width="38" height="38" viewBox="0 0 38 38" fill={W} stroke="#252423" strokeWidth="1.700">
          <path d="M7 36.500H1.500v-35H17l10 10v4M17 1.500v11h10" />
          <path d="M20 27L34 15c2-1 3 0 2 2L25 32M20 27c3 0 5 3 5 5-2 6-10 5-14 4 4 0 3-3 4-6 1-2 3-3 5-3z" />
        </svg>
      </div>
      <svg className="mt-[6px]" width="269" height="15" viewBox="0 0 269 15" fill="none" stroke="#8a8886" strokeWidth="1.500"><path d="M0 13.500h24L35.500 1.500 47.500 13.500H269" /></svg>
      <div className="ml-[9px] mt-[8px] grid w-[252px] grid-cols-6">
        {vizIcons.map((ic, i) => (
          <div key={i} className="flex h-[42px] w-[42px] items-center justify-center">
            <svg className="overflow-visible" width="28" height="28" viewBox="0 0 28 28">{ic}</svg>
          </div>
        ))}
      </div>
      <div className="mt-[6px] border-t border-[#d8d6d4] pl-[18px] pt-[13px] leading-[24px]">Values</div>
      <div className="ml-[6px] mt-[8px] flex h-[42px] w-[255px] items-center rounded-[2px] border border-dashed border-[#c8c6c4] bg-white pb-[2px] pl-[15px]">Add data fields here</div>
      <div className="ml-[18px] mt-[15px] text-[17px] font-semibold leading-[24px] text-[#484644]">Drill through</div>
      <div className="ml-[18px] mr-[8px] mt-[14px] flex h-[24px] items-center justify-between">Cross-report<Toggle /></div>
      <div className="ml-[18px] mr-[8px] mt-[16px] flex h-[24px] items-center justify-between">Keep all filters<Toggle /></div>
      <div className="ml-[6px] mt-[15px] flex h-[38px] w-[255px] items-center whitespace-nowrap rounded-[2px] border border-dashed border-[#c8c6c4] bg-white pl-[12px] pt-[1px]">Add drill-through fields here</div>
    </aside>
  );
}

function DataPane() {
  return (
    <aside className="flex flex-1 flex-col bg-[#f3f2f1] text-[#252423]">
      <div className="ml-[13px] mr-[12px] mt-[14px] flex h-[32px] items-center justify-between">
        <span className="text-[21.800px] font-semibold leading-[30px]">Data</span>
        <Chevrons />
      </div>
      <div className="ml-[7px] mt-[22px] flex h-[39px] w-[258px] items-center rounded-[3px] border border-[#797775] bg-white pl-[11px]">
        <Magnifier size={21} color="#252423" sw={1.400} />
        <span className="ml-[10px] mt-[3px] text-[19.300px] text-[#484644]">Search</span>
      </div>
      <div className="ml-[15px] mt-[20px] flex h-[24px] items-center">
        <svg width="10" height="18" viewBox="0 0 10 18" fill="none" stroke={D} strokeWidth="1.400"><path d="M1 1l8 8-8 8" /></svg>
        <svg className="ml-[9px]" width="20" height="18" viewBox="0 0 20 18" fill="none" stroke="#252423" strokeWidth="1.600">
          <path d="M1 1h18v16H1zM1 4h18M1 8.500h18M1 13h18M7 4v13M13 4v13" />
        </svg>
        <span className="ml-[9px] mt-[1px] text-[16.800px] text-[#3b3a39]">Playway</span>
      </div>
    </aside>
  );
}

/* ---------- page tabs and status bar ---------- */

function PageTabs() {
  const tabs: [string, string][] = [
    ["Rooms Avalability", "w-[200px]"],
    ["Kitchen Avalability", "w-[206px]"],
    ["Water Purifier", "w-[170px]"],
    ["Bala Painting", "w-[163px]"],
    ["Metered Electricity", "w-[209px]"],
  ];
  return (
    <div className="flex h-[52px] w-[1378px] bg-[#f3f2f1] text-[17.100px] text-[#252423]">
      <div className="flex w-[119px] items-center gap-[27px] pl-[69px]">
        <svg width="6" height="12" viewBox="0 0 6 12"><path d="M6 0v12L0 6z" fill="#c8c6c4" /></svg>
        <svg width="7" height="12" viewBox="0 0 7 12"><path d="M0 0v12l7-6z" fill="#000" /></svg>
      </div>
      <div className="flex w-[148px] items-center justify-center border-b-[5px] border-l border-r border-b-[#117865] border-l-[#a19f9d] border-r-[#c8c6c4] bg-white pt-[6px] font-semibold">Main Page</div>
      {tabs.map(([t, w]) => (
        <div key={t} className={`flex items-center justify-center whitespace-nowrap border-r border-[#c8c6c4] pt-[1px] ${w}`}>{t}</div>
      ))}
      <div className="flex w-[105px] items-center pl-[30px] pt-[1px]">Toilets</div>
      <div className="mt-[2px] flex h-[48px] w-[58px] items-center justify-center bg-[#117865]">
        <svg width="17" height="17" viewBox="0 0 17 17"><path d="M8.500 0v17M0 8.500h17" stroke="#fff" strokeWidth="4" /></svg>
      </div>
    </div>
  );
}

function StatusBar() {
  return (
    <div className="flex h-[36px] items-center border-b-[2px] border-t border-b-black border-t-[#dddbd9] bg-[#f3f2f1] pl-[8px] pr-[8px] pt-[1px] text-[17.200px] text-[#605e5c]">
      <span>Page 1 of 8</span>
      <div className="ml-auto flex items-center">
        <svg className="-mt-[1px]" width="185" height="18" viewBox="0 0 185 18">
          <path d="M0 9.500h7M168 9h12M174 3v12" stroke="#484644" strokeWidth="2.200" />
          <path d="M13 9H163M88 5.500v7" stroke="#605e5c" strokeWidth="1.400" />
          <rect x="54" y="0" width="6" height="18" fill="#605e5c" />
        </svg>
        <span className="ml-[21px] w-[35px] text-[16.500px]">64%</span>
        <svg className="ml-[28px]" width="24" height="18" viewBox="0 0 24 18" fill="none" stroke="#605e5c" strokeWidth="1.700">
          <path d="M1 1h22v16H1zM4 6.500V4h3.500M16.500 4H20v2.500M20 11.500V14h-3.500M7.500 14H4v-2.500" />
        </svg>
        <span className="ml-[28px] w-[287px] whitespace-nowrap">Update available (click to download)</span>
      </div>
    </div>
  );
}

/* ---------- taskbar ---------- */

function Skyline() {
  return (
    <svg className="ml-auto" width="116" height="56" viewBox="0 0 116 56">
      <defs>
        <radialGradient id="sky" cx="50%" cy="50%" r="52%">
          <stop offset="0" stopColor="#1d49b8" /><stop offset=".35" stopColor="#5a68ba" /><stop offset=".72" stopColor="#c4bddb" /><stop offset="1" stopColor="#fff" stopOpacity="0" />
        </radialGradient>
        <linearGradient id="glow" x1="0" y1="0" x2="0" y2="1"><stop offset=".5" stopColor="#d8717a" stopOpacity="0" /><stop offset="1" stopColor="#e28080" /></linearGradient>
        <radialGradient id="hill" cx="50%" cy="100%" r="60%"><stop offset="0" stopColor="#a58bd6" /><stop offset="1" stopColor="#231560" /></radialGradient>
      </defs>
      <ellipse cx="57" cy="29" rx="52" ry="30" fill="url(#sky)" />
      <ellipse cx="60" cy="36" rx="30" ry="18" fill="url(#glow)" opacity=".6" />
      <path d="M25 24L38 14l16 4 13 3 22-2-2 13H73l-6-11" fill="none" stroke="#f4e6c8" strokeWidth="1" />
      {[[25, 24], [38, 14], [54, 18], [67, 21], [89, 19], [73, 33], [87, 33]].map(([x, y]) => <circle key={`${x}-${y}`} cx={x} cy={y} r="3" fill="#fff7dc" />)}
      {[[23, 9], [63, 7], [77, 6], [43, 27], [54, 33], [29, 37], [98, 38], [16, 40], [79, 43]].map(([x, y]) => <circle key={`${x}-${y}`} cx={x} cy={y} r="1.600" fill="#f3dfa0" />)}
      <path d="M0 56c6-5 14-4 18-9 4-7 10-2 15-5 5-1 7-6 11-6s8 8 13 8 6-3 11-1 7 4 14 2c9-2 12 2 18 5 7 2 13 2 16 6z" fill="#231560" />
      <path d="M6 56c20-9 32-7 52-7s36 0 52 7z" fill="url(#hill)" />
    </svg>
  );
}

function Badge({ children, dark }: Kids & { dark?: boolean }) {
  return (
    <span className={`absolute flex h-[24px] w-[24px] items-center justify-center rounded-full border ${dark ? "-right-[3px] top-[15px] border-[#2a2c33] bg-[#25272f] text-[13px] font-semibold tracking-[-0.500px] text-white" : "-right-[13px] top-[17px] border-[#7a7a7a] bg-[#d9dadb] text-[17px] font-semibold text-black"}`}>
      {children}
    </span>
  );
}

function TaskApp({ children, width, under }: Kids & { width: string; under?: string }) {
  return (
    <div className={`flex h-[60px] flex-col items-center ${width}`}>
      <div className="relative mt-[12px] h-[36px] w-[36px]">{children}</div>
      {under && <div className={`mt-auto h-[3px] bg-[#9cc8df] ${under}`} />}
    </div>
  );
}

function Taskbar() {
  return (
    <footer className="flex h-[60px] items-center bg-[linear-gradient(90deg,#dde8d9_0%,#e0ead9_4%,#dde4f0_26%,#dfe4ef_36%,#efe6ed_44%,#f3e4ec_54%,#f3e2e6_62%,#efe0de_66%,#f0e0ec_70%,#dfe3ef_72%,#dfe4ee_100%)] text-black">
      <svg className="ml-[24px]" width="24" height="24" viewBox="0 0 24 24"><path d="M0 3.500l10-1.400V11.500H0zM11 2L24 0v11.500H11zM0 12.500h10v9.600L0 20.700zM11 12.500h13V24l-13-1.800z" /></svg>
      <div className="ml-[24px] flex h-[59px] w-[432px] items-center border-[2px] border-[#c6c6c8] bg-white pl-[16px]">
        <Magnifier size={24} color="#111" sw={1.800} />
        <span className="ml-[18px] mt-[2px] text-[20.600px] text-[#1f1f1f]">Type here to search</span>
        <Skyline />
      </div>
      <svg className="ml-[24px]" width="24" height="24" viewBox="0 0 24 24"><circle cx="12" cy="12" r="10" fill="none" stroke="#000" strokeWidth="3.500" /></svg>
      <svg className="ml-[48px]" width="24" height="24" viewBox="0 0 24 24" fill="none" stroke="#000" strokeWidth="1.500">
        <path d="M.8 6h15.500v12H.8zM.8 0v3h15.500V0M.8 24v-3h15.500v3M22.500 0v6M22.500 12v12" /><path d="M21 9h3" strokeWidth="3" />
      </svg>
      <div className="ml-[26px] flex">
        <TaskApp width="w-[76px]">
          <svg width="36" height="36" viewBox="0 0 36 36">
            <path d="M9 7V4q0-2 2-2h14q2 0 2 2v3" fill="none" stroke="#29b5f0" strokeWidth="2.500" />
            <rect y="5" width="36" height="30" rx="3" fill="#1462a8" /><path d="M0 22h36v10q0 3-3 3H3q-3 0-3-3z" fill="#164a86" />
            <rect x="10" y="12" width="7" height="7" fill="#f25022" /><rect x="18.500" y="12" width="7" height="7" fill="#7fba00" /><rect x="10" y="20.500" width="7" height="7" fill="#00a4ef" /><rect x="18.500" y="20.500" width="7" height="7" fill="#ffb900" />
          </svg>
        </TaskApp>
        <TaskApp width="w-[74px]">
          <svg width="36" height="36" viewBox="0 0 36 36">
            <path d="M0 12L18 .5 36 12v22H0z" fill="#0a5fa8" /><path d="M4 11h28v12H4z" fill="#f4f4f4" /><path d="M0 12l18 12L0 34z" fill="#1c9bea" /><path d="M36 12L18 24l18 10z" fill="#38c0f8" /><path d="M0 34l18-13 18 13z" fill="#2aa8f0" />
          </svg>
          <Badge>2</Badge>
        </TaskApp>
        <TaskApp width="w-[76px]">
          <svg width="36" height="36" viewBox="0 0 36 36">
            <path d="M2 7q0-2 2-2h10l3 4H2z" fill="#e8a200" /><rect x="2" y="8" width="32" height="22" rx="1.500" fill="#ffd257" /><path d="M7 32V22q0-2 2-2h17q2 0 2 2v10h-6v-6h-9v6z" fill="#3e97dd" />
          </svg>
        </TaskApp>
        <TaskApp width="w-[75px]">
          <svg width="36" height="36" viewBox="0 0 36 36">
            <defs><linearGradient id="edge" x1="0" y1="0" x2="1" y2=".4"><stop offset="0" stopColor="#2aa9ea" /><stop offset=".5" stopColor="#2cc3d0" /><stop offset="1" stopColor="#6ae05a" /></linearGradient></defs>
            <circle cx="18" cy="18" r="18" fill="#0f7cd2" />
            <path d="M0 16C2 4 12 0 18 0c10 0 18 7 18 15 0 6-5 9-9 9-3 0-6-1-5-3 3-3 1-10-8-11C8 9 2 12 0 16z" fill="url(#edge)" />
            <path d="M14 14c-5 8-1 18 9 21 5-1 9-5 10-9-7 5-17 1-16-6 0-2 1-3 2-4-1-2-3-3-5-2z" fill="#1452a0" />
            <path d="M19 15c4 2 4 5 3 7 0 2 3 3 6 3 3 0 6-2 8-4l-2 5c-8 5-18 1-17-6 0-2 1-4 2-5z" fill="#f1e6ed" />
          </svg>
        </TaskApp>
        <TaskApp width="w-[75px]" under="w-[61px]">
          <svg width="36" height="36" viewBox="0 0 36 36">
            <circle cx="18" cy="18" r="18" fill="#fbc116" />
            <path d="M2.400 9A18 18 0 0 1 33.600 9H18v9z" fill="#e33b2e" />
            <path d="M2.400 9a18 18 0 0 0 15 27l8-13.500-7.400-4.500-7.800 4.500z" fill="#26994a" />
            <circle cx="18" cy="18" r="8.800" fill="#fff" /><circle cx="18" cy="18" r="7" fill="#2a7bf0" />
          </svg>
        </TaskApp>
        <TaskApp width="w-[76px]" under="w-[61px]">
          <svg width="36" height="36" viewBox="0 0 36 36">
            <circle cx="18" cy="18" r="18" fill="#fff" />
            <path d="M8.500 27.500l1.500-5a9.500 9.500 0 1 1 4 3.500z" fill="none" stroke="#25c25a" strokeWidth="2.500" />
            <path d="M14 13c2-2 3 1 3 2s-1 1 0 3 3 2 4 1 4 1 2 3c-4 3-11-4-9-9z" fill="#25c25a" />
          </svg>
          <Badge dark>85</Badge>
        </TaskApp>
        <div className="bg-white/65">
          <TaskApp width="w-[73px]" under="w-[73px]">
            <svg width="36" height="36" viewBox="0 0 36 36">
              <rect x="19" y="0" width="12.500" height="36" rx="1" fill="#d9960c" /><rect x="11.500" y="9" width="12.500" height="27" rx="1" fill="#edc02c" /><rect x="4" y="18" width="12" height="18" rx="1" fill="#f6de6a" />
            </svg>
          </TaskApp>
        </div>
      </div>
      <svg className="ml-[197px] mt-[3px]" width="38" height="32" viewBox="0 0 38 32">
        <circle cx="25" cy="11" r="10" fill="#f59a1e" /><path d="M9 31a8.500 8.500 0 0 1 0-17c2-9 16-10 18-1 7-1 10 4 9.500 9-.5 6-4 9-8 9z" fill="#a9c5f4" /><path d="M8 31c-9 0-10-12-2-14 5 0 8 4 9 4 4-4 14-6 17 2 0 5-3 8-6 8z" fill="#c6dbfa" />
      </svg>
      <div className="ml-[11px] mt-[5px] flex w-[218px] whitespace-nowrap text-[20.200px]">
        <span className="w-[56px]">33°C</span><span>Mostly cloudy</span>
      </div>
      <svg width="19" height="11" viewBox="0 0 19 11" fill="none" stroke="#000" strokeWidth="1.600"><path d="M.8 10.200L9.500 1.500l8.700 8.700" /></svg>
      <div className="ml-[24px] w-[35px] text-[17px]">ENG</div>
      <div className="ml-[17px] w-[100px] whitespace-nowrap text-center text-[17.900px] leading-[28px] tracking-[-0.100px]">17:52<br />04-08-2024</div>
      <div className="relative ml-[25px] h-[24px] w-[24px]">
        <svg width="24" height="25" viewBox="0 0 24 25"><path d="M0 0h24v19H13l-3 5-4-5H0z" /><path d="M5 6h14M5 10h14M5 14h14" stroke="#fff" strokeWidth="1.300" /></svg>
        <span className="absolute -right-[11px] top-[12px] flex h-[24px] w-[24px] items-center justify-center rounded-full border border-[#8a8a8a] bg-[#d0d2d4] text-[17px] font-semibold">3</span>
      </div>
      <div className="ml-auto mr-[6px] h-[60px] w-[1.500px] bg-[#a9afbd]" />
    </footer>
  );
}

export default function App() {
  return (
    <div className="flex h-[1080px] w-[1920px] flex-col overflow-hidden bg-[#f3f2f1] font-['Open_Sans']">
      <TitleBar />
      <MenuBar />
      <Ribbon />
      <div className="flex h-[744px]">
        <div className="flex w-[1378px] shrink-0 flex-col">
          <div className="flex h-[692px]">
            <ViewRail />
            <Report />
            <FiltersPane />
          </div>
          <PageTabs />
        </div>
        <VisualizationsPane />
        <DataPane />
      </div>
      <StatusBar />
      <Taskbar />
    </div>
  );
}
